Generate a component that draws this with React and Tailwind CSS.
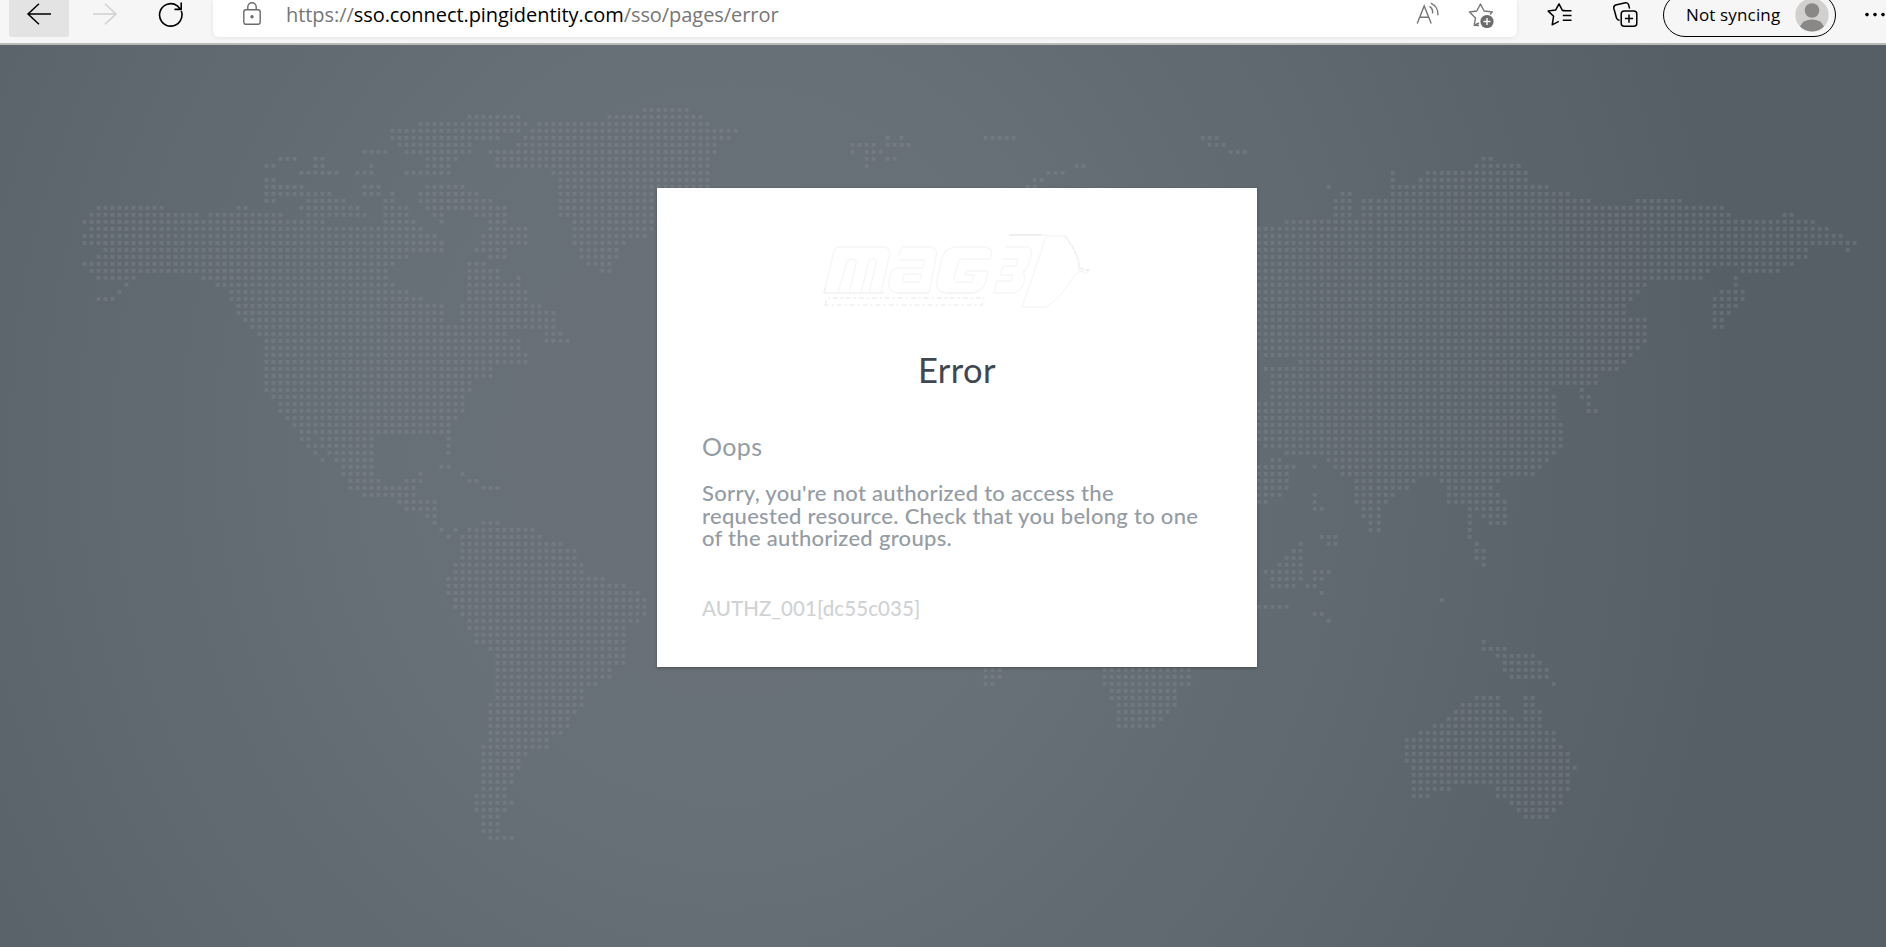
import React from "react";

// Land outlines, each group in its own chart coordinates (origin + scale to page pixels).
const charts = [
  {
    ox: 60, oy: 100, sx: 2.613, sy: 3,
    polys: [
      "58,365 100,318 150,312 260,318 380,345 400,338 480,318 510,335 560,338 640,355 640,345 625,318 640,295 600,290 550,305 535,305 535,235 560,235 610,255 700,270 745,295 780,320 800,345 770,350 720,352 690,370 740,380 830,380 840,350 845,300 880,300 910,320 910,350 950,370 940,400 970,405 1000,388 975,345 940,320 920,290 935,260 1055,255 1060,275 1095,280 1165,320 1165,375 1225,385 1225,430 1180,435 1175,475 1120,475 1115,455 1060,455 1100,430 1100,400 1120,370 1090,350 1080,325 1010,330 1015,385 995,395 1000,455 920,450 905,475 870,500 850,530 865,550 900,570 960,600 1000,610 1000,670 1045,670 1045,610 1065,600 1065,545 1050,545 1060,485 1105,485 1145,510 1150,545 1190,550 1195,520 1215,570 1235,600 1295,630 1295,690 1335,715 1335,730 1265,725 1265,690 1165,690 1200,720 1200,755 1225,765 1215,790 1130,790 1125,830 1090,835 1085,860 1065,880 1065,915 1050,940 1030,965 1015,975 1020,1060 1005,1060 1000,1000 840,1000 815,1020 820,1130 835,1150 860,1170 915,1165 925,1135 945,1115 940,1165 925,1192 790,1192 755,1160 740,1130 735,1095 700,1060 680,1030 655,990 690,1085 660,1060 640,1035 605,970 575,935 540,880 535,800 535,730 520,700 490,685 465,640 440,600 430,560 385,550 360,525 290,515 240,530 200,520 180,555 100,535 75,515 60,490 100,465 115,450 50,430 45,410 70,400",
      "865,85 940,68 1060,65 1070,45 1215,45 1220,70 1215,95 1130,118 1075,135 1075,160 1035,170 1030,205 1035,225 900,225 900,205 950,195 950,165 900,160 880,130 865,110",
      "1115,155 1190,135 1205,115 1230,90 1240,70 1410,70 1435,48 1490,30 1568,25 1650,28 1690,60 1710,86 1775,86 1775,97 1745,118 1713,140 1700,290 1568,390 1530,410 1475,425 1465,470 1435,515 1390,510 1360,480 1340,430 1340,350 1305,345 1305,240 1280,205 1140,200 1140,160",
      "535,192 570,175 618,172 612,182 575,182 570,204 535,204",
      "625,212 660,192 725,200 728,224 625,224",
      "770,212 815,190 835,224 775,224",
      "790,255 830,255 850,278 820,305 800,285 775,285",
      "785,150 855,150 855,162 785,162",
      "900,240 870,255 875,290 850,290 880,250",
      "660,172 690,172 690,182 660,182",
      "100,592 125,592 160,565 165,580 125,602 100,602",
    ],
    dots: [],
  },
  {
    ox: 360, oy: 440, sx: 3, sy: 3,
    polys: [
      "5,88 40,88 45,110 75,140 115,135 150,110 185,95 180,130 165,155 170,178 228,180 230,250 250,262 245,275 215,265 195,225 180,210 135,208 115,185 95,168 5,168",
      "300,283 340,262 365,240 415,240 450,260 520,262 545,285 560,305 605,310 645,330 665,365 665,395 640,410 730,410 790,433 855,470 860,522 810,560 795,590 795,665 770,685 765,710 710,730 670,745 670,810 625,835 625,860 600,880 565,885 560,925 500,940 495,965 475,1000 455,1025 435,1045 460,1085 435,1110 415,1150 415,1172 455,1185 455,1195 390,1195 365,1175 345,1110 345,1060 365,1040 365,910 385,880 388,790 405,760 405,640 370,622 340,608 325,560 300,520 270,490 260,450 265,410 285,370 305,340 305,310",
    ],
    dots: [[240, 79], [264, 79], [306, 100], [327, 121], [348, 121], [369, 142], [390, 142], [411, 142], [264, 288], [285, 267]],
  },
  {
    ox: 1250, oy: 120, sx: 2.465, sy: 3,
    polys: [
      "0,325 18,318 100,300 130,285 190,300 205,290 205,240 225,215 250,215 250,290 272,290 272,230 300,240 350,230 345,150 355,150 360,195 400,190 440,155 540,150 575,115 600,115 620,135 660,130 685,155 690,185 735,200 800,225 870,255 930,250 970,235 1070,235 1080,262 1160,260 1200,285 1290,285 1340,278 1385,300 1430,330 1495,365 1470,392 1430,375 1390,380 1375,410 1330,435 1300,460 1215,460 1200,480 1215,510 1215,540 1190,570 1165,625 1142,625 1140,535 1185,490 1200,455 1190,440 1140,440 1135,465 1100,480 980,480 970,510 935,540 915,575 975,595 975,665 940,705 920,745 870,755 855,790 815,800 845,830 855,880 830,880 810,830 800,800 740,800 765,850 745,880 770,910 770,980 745,1020 700,1060 620,1080 600,1100 635,1140 645,1190 630,1215 585,1215 560,1180 545,1175 545,1260 535,1260 535,1190 520,1150 485,1145 485,1110 465,1080 465,1060 410,1085 385,1105 340,1130 330,1190 325,1235 292,1235 275,1180 255,1130 255,1070 220,1065 190,1020 100,1003 60,985 18,975 18,850 50,840 50,770 30,745 110,745 120,710 40,705 0,690",
      "0,1030 70,1010 108,1035 105,1080 80,1120 35,1150 0,1150",
    ],
    dots: [[192, 202], [158, 1040]],
  },
  {
    ox: 1250, oy: 440, sx: 3, sy: 3,
    polys: [
      "145,305 155,305 155,420 130,440 60,440 40,390 85,365 130,330",
      "695,600 725,605 725,618 760,620 850,640 880,660 895,690 915,720 915,735 900,735 885,715 840,712 780,712 758,685 735,650 695,625",
      "465,890 510,870 570,850 600,810 635,785 675,790 680,765 745,765 750,800 790,825 820,850 820,765 850,765 870,800 875,850 915,870 920,905 955,935 975,980 955,1050 935,1090 915,1110 890,1132 810,1130 780,1090 735,1065 715,1030 640,1030 600,1055 535,1070 485,1070 485,990 465,960",
    ],
    dots: [[190, 163], [190, 184], [190, 205], [212, 205], [212, 290], [235, 288], [255, 290], [235, 308], [252, 308], [190, 393], [212, 393], [233, 393], [190, 414], [212, 412], [172, 434], [190, 434], [212, 456], [25, 497], [46, 497], [66, 497], [88, 497], [107, 497], [190, 518], [212, 518], [233, 539], [656, 290], [678, 310], [678, 330], [700, 330], [678, 350], [700, 350], [700, 371], [572, 477]],
  },
  {
    ox: 960, oy: 650, sx: 3, sy: 3,
    polys: [
      "425,50 693,50 693,105 665,115 660,145 640,175 610,205 590,230 470,230 470,180 450,150 430,110",
      "70,50 125,50 120,85 105,105 70,105",
    ],
    dots: [],
  },
  {
    ox: 700, oy: 100, sx: 2.8, sy: 3,
    polys: [],
    dots: [
      [527, 113], [565, 113], [429, 134], [448, 134], [468, 134], [488, 134], [527, 134], [546, 134], [565, 134], [585, 134],
      [429, 155], [468, 155], [488, 155], [507, 155], [468, 177], [488, 177], [527, 177], [546, 177], [468, 198],
      [800, 113], [820, 113], [840, 113], [859, 113], [878, 113],
      [1407, 113], [1426, 113], [1445, 113], [1426, 134], [1445, 134], [1465, 134], [1485, 155], [1504, 155], [1523, 155],
      [1055, 198], [1074, 198], [976, 219], [996, 219], [1015, 219], [937, 240], [957, 240], [918, 261], [937, 261],
    ],
  },
];

const inside = (x, y, pts) => {
  let hit = false;
  for (let i = 0, j = pts.length - 1; i < pts.length; j = i++) {
    const [xi, yi] = pts[i];
    const [xj, yj] = pts[j];
    if (yi > y !== yj > y && x < ((xj - xi) * (y - yi)) / (yj - yi) + xi) hit = !hit;
  }
  return hit;
};

// Column phase shifts slightly between the three map tiles.
const columns = [];
for (let x = 0.5; x < 800; x += 7) columns.push(x);
for (let x = 803.6; x < 1373; x += 7) columns.push(x);
for (let x = 1378.7; x < 1886; x += 7) columns.push(x);

const nearest = (x) => columns.reduce((a, b) => (Math.abs(b - x) < Math.abs(a - x) ? b : a));

const buildMap = () => {
  const seen = new Set();
  for (const c of charts) {
    const polys = c.polys.map((s) =>
      s.split(" ").map((p) => {
        const [x, y] = p.split(",").map(Number);
        return [c.ox + x / c.sx, c.oy + y / c.sy];
      })
    );
    for (let y = 4.4; y < 947; y += 7)
      for (const x of columns) if (polys.some((p) => inside(x, y, p))) seen.add(x.toFixed(1) + "," + y.toFixed(1));
    for (const [dx, dy] of c.dots) {
      const y = 4.4 + 7 * Math.round((c.oy + dy / c.sy - 4.4) / 7);
      seen.add(nearest(c.ox + dx / c.sx).toFixed(1) + "," + y.toFixed(1));
    }
  }
  let d = "";
  for (const k of seen) {
    const [x, y] = k.split(",").map(Number);
    d += `M${(x - 1.9).toFixed(1)} ${(y - 1.4).toFixed(1)}h3.8v3.8h-3.8z`;
  }
  return d;
};
const mapPath = buildMap();

function WorldMap() {
  return (
    <svg className="absolute left-0 -top-[45px]" width="1886" height="947" viewBox="0 0 1886 947">
      <path d={mapPath} fill="#8f989f" fillOpacity="0.28" />
    </svg>
  );
}

function Logo() {
  return (
    <svg className="block" width="270" height="76" viewBox="0 0 270 76" fill="none" stroke="#f6f6f6" strokeWidth="1.3" strokeLinejoin="round">
      <path d="M2 61L12 19Q13 15 18 15H60Q70 15 67 25L59 61H47L54 32Q55 27 50 27L47 28L39 61H27L34 32Q35 27 30 27Q26 27 25 30L16 61Z" />
      <path d="M76 25L80 15H108Q116 16 114 25L107 61H76Q65 60 67 49L69 41Q71 36 79 36H101L103 28H77M82 43Q80 49 83 50H97L100 42H84Z" />
      <path d="M168 27L170 21Q169 15 161 15H134Q123 16 120 26L115 48Q113 61 125 61H150Q161 60 164 49L166 39H145L143 43H152L150 50H134Q131 49 132 45L136 31Q137 27 142 27Z" />
      <path d="M183 15H206Q211 17 209 24L205 36L201 40L203 46Q201 60 190 61H172L175 49H189L191 43H178L181 34H194L196 27H180" />
      <path d="M187 3H224L219 20L205 61L200 75H224Q240 65 252 44L258 39L267 38L264 42L257 38Q259 25 243 4H224" />
      <path d="M187 3H220" stroke="#efefef" strokeWidth="2" />
      <path d="M243 4Q257 22 257 36L267 38" stroke="#ececec" strokeDasharray="4 2" />
      <path d="M2 61L4 53M3 73L5 66H162L160 73Z" stroke="#efefef" strokeDasharray="5 3 2 3" />
      <path d="M2 61H62M76 61H107M125 61H152" stroke="#f2f2f2" />
    </svg>
  );
}

function Toolbar() {
  return (
    <header className="flex h-[45px] items-start border-b-2 border-[#b9bbba] bg-[#f6f6f6] pl-[9px]">
      <div className="flex h-[37px] w-[60px] shrink-0 items-start justify-center rounded-b-[3px] bg-[#e3e3e3]">
        <svg className="mt-[2px]" width="26" height="24" viewBox="0 0 26 24" fill="none" stroke="#000" strokeWidth="1.5">
          <path d="M25 12H2M13 1.8L2 12l11 10.2" />
        </svg>
      </div>
      <svg className="mt-[2px] ml-[23px] shrink-0" width="26" height="24" viewBox="0 0 26 24" fill="none" stroke="#d0d0d0" strokeWidth="1.5">
        <path d="M1 12h23M13 1.8L24 12 13 22.2" />
      </svg>
      <svg className="mt-[1px] ml-[40px] shrink-0" width="26" height="27" viewBox="0 0 26 27" fill="none" stroke="#000" strokeWidth="1.6">
        <path d="M23.3 10.1A11.2 11.2 0 1 1 19.4 4.9L22.5 8.2M23.2 1.5V8.4H16.5" />
      </svg>
      <div className="ml-[29px] flex h-[37px] w-[1304px] shrink-0 items-start rounded-b-[6px] bg-white shadow-[0_1px_4px_rgba(0,0,0,0.08)]">
        <svg className="mt-[2px] ml-[30px] shrink-0" width="18" height="24" viewBox="0 0 18 24" fill="none" stroke="#6b6b6b" strokeWidth="1.4">
          <rect x=".8" y="7.7" width="16.4" height="14.6" rx="2.2" />
          <path d="M4.8 7.7V5a4.2 4.2 0 0 1 8.4 0v2.7" />
          <circle cx="9" cy="14.7" r="1" fill="#6b6b6b" />
        </svg>
        <div className="ml-[25px] w-[1130px] shrink-0 text-[20px] leading-[30px] tracking-[-0.06px] whitespace-nowrap text-[#767676] [font-family:'Open_Sans','Noto_Sans',sans-serif]">
          https://<span className="text-black">sso.connect.pingidentity.com</span>/sso/pages/error
        </div>
        <svg className="mt-[2px] shrink-0" width="24" height="24" viewBox="0 0 24 24" fill="none" stroke="#767676" strokeWidth="1.4">
          <path d="M1.2 21.5L8.2 4l7 17.5M3.8 15.3h9M13.6 4.4a7.5 7.5 0 0 1 3 7M14.8 1.2a12 12 0 0 1 7.2 12" />
        </svg>
        <svg className="mt-[1px] ml-[28px] shrink-0" width="27" height="28" viewBox="0 0 27 28" fill="none" stroke="#767676" strokeWidth="1.4" strokeLinejoin="round">
          <path d="M11 24.5l-4.8-.2 1.3-7.4L1.5 11l7.3-1L12.5 3l3.6 7 8.2 1-2.3 2.4M7 24l4-2" />
          <circle cx="19" cy="20.5" r="6.6" fill="#6b6b6b" stroke="none" />
          <path d="M19 17v7M15.5 20.5h7" stroke="#fff" />
        </svg>
      </div>
      <svg className="mt-[2px] ml-[30px] shrink-0" width="26" height="26" viewBox="0 0 26 26" fill="none" stroke="#000" strokeWidth="1.5" strokeLinejoin="round">
        <path d="M18 8.4h-2.6L12 1.8 8.6 8.1l-7.4 1 5.4 5.1-1.4 8.6 6.6-3.4M15.8 8.7h8.7M15.8 13.5h8.7M15.8 18.3h8.7" />
      </svg>
      <svg className="mt-[1px] ml-[39px] shrink-0" width="27" height="27" viewBox="0 0 27 27" fill="none" stroke="#000" strokeWidth="1.5" strokeLinejoin="round">
        <rect x="9.2" y="10" width="15.6" height="15.2" rx="3" />
        <path d="M17 13.5v8.2M12.9 17.6h8.2M7.6 19.4Q5 19 4.4 16.8L1.8 7.2Q1.4 4.8 3.6 4L13.6 1.8Q16 1.6 16.6 3.8L17.6 7.6" />
      </svg>
      <div className="-mt-[7px] ml-[24px] flex h-[44px] w-[173px] shrink-0 items-center rounded-full border-[1.5px] border-black pr-[6px] pl-[22px]">
        <span className="flex-1 text-[17px] leading-[24px] tracking-[0.15px] whitespace-nowrap text-black [font-family:'Open_Sans','Noto_Sans',sans-serif]">Not syncing</span>
        <svg width="34" height="34" viewBox="0 0 34 34">
          <circle cx="17" cy="17" r="16.7" fill="#d2d0ce" />
          <circle cx="17" cy="12.5" r="7.3" fill="#8a8886" />
          <path d="M5 28.5Q8 21.5 17 21.5T29 28.5Q24 33.4 17 33.4T5 28.5z" fill="#8a8886" />
        </svg>
      </div>
      <svg className="mt-[12px] ml-[29px] shrink-0" width="20" height="6" viewBox="0 0 20 6" fill="#000">
        <circle cx="2" cy="2.6" r="1.8" />
        <circle cx="10" cy="2.6" r="1.8" />
        <circle cx="18" cy="2.6" r="1.8" />
      </svg>
    </header>
  );
}

export default function App() {
  return (
    <div className="flex h-[947px] w-[1886px] flex-col overflow-hidden">
      <Toolbar />
      <main className="relative flex flex-1 items-start overflow-hidden bg-[radial-gradient(ellipse_1150px_1300px_at_730px_400px,#697077_0%,#687077_30%,#575f66_88%)] pt-[143px] pl-[657px]">
        <WorldMap />
        <section className="relative h-[479px] w-[600px] bg-white px-[45px] shadow-[0_1px_3px_rgba(0,0,0,0.3)] [font-family:Lato,sans-serif]">
          <div className="flex justify-center pt-[44px]">
            <Logo />
          </div>
          <h1 className="mt-[40px] text-center text-[34.5px] leading-[44px] tracking-[0.4px] text-[#3f4851]">Error</h1>
          <h2 className="mt-[39px] text-[25px] leading-[30px] tracking-[0.4px] text-[#949ca4]">Oops</h2>
          <p className="mt-[21px] text-[22px] leading-[22.7px] font-medium tracking-[0.3px] whitespace-nowrap text-[#949ca4]">
            Sorry, you're not authorized to access the
            <br />
            requested resource. Check that you belong to one
            <br />
            of the authorized groups.
          </p>
          <p className="mt-[45px] text-[20.5px] leading-[26px] font-medium tracking-[0.1px] text-[#d0d2d4]">AUTHZ_001[dc55c035]</p>
        </section>
      </main>
    </div>
  );
}
